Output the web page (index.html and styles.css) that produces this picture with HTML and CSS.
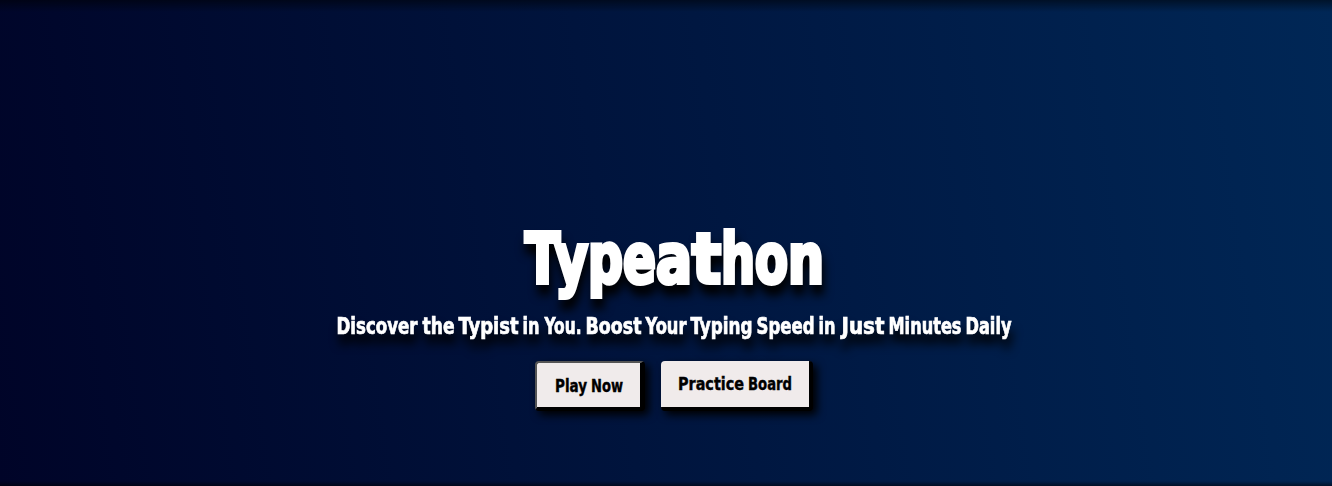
FILE: index.html
```
<!DOCTYPE html>
<html lang="en">
<head>
<meta charset="utf-8">
<title>Typeathon</title>
<link rel="stylesheet" href="styles.css">
</head>
<body>
<main class="hero">
  <h1 class="title">
    <svg class="lettering" width="310" height="84" viewBox="0 0 310 84">
      <text y="63"><tspan x="6" textLength="35" lengthAdjust="spacingAndGlyphs">T</tspan><tspan x="36" textLength="33" lengthAdjust="spacingAndGlyphs">y</tspan><tspan x="69" textLength="35" lengthAdjust="spacingAndGlyphs">p</tspan><tspan x="104" textLength="33" lengthAdjust="spacingAndGlyphs">e</tspan><tspan x="137" textLength="36" lengthAdjust="spacingAndGlyphs">a</tspan><tspan x="173" textLength="29" lengthAdjust="spacingAndGlyphs">t</tspan><tspan x="202" textLength="34" lengthAdjust="spacingAndGlyphs">h</tspan><tspan x="236" textLength="33" lengthAdjust="spacingAndGlyphs">o</tspan><tspan x="269" textLength="36" lengthAdjust="spacingAndGlyphs">n</tspan></text>
    </svg>
  </h1>
  <p class="tagline">
    <svg class="lettering" width="690" height="36" viewBox="0 0 690 36">
      <text y="24"><tspan x="7.5" textLength="81" lengthAdjust="spacingAndGlyphs">Discover</tspan> <tspan x="93.5" textLength="32" lengthAdjust="spacingAndGlyphs">the</tspan> <tspan x="129.5" textLength="60" lengthAdjust="spacingAndGlyphs">Typist</tspan> <tspan x="193.5" textLength="17" lengthAdjust="spacingAndGlyphs">in</tspan> <tspan x="215.5" textLength="37" lengthAdjust="spacingAndGlyphs">You.</tspan> <tspan x="256.5" textLength="56" lengthAdjust="spacingAndGlyphs">Boost</tspan> <tspan x="316.5" textLength="41" lengthAdjust="spacingAndGlyphs">Your</tspan> <tspan x="361.5" textLength="62" lengthAdjust="spacingAndGlyphs">Typing</tspan> <tspan x="427.5" textLength="58" lengthAdjust="spacingAndGlyphs">Speed</tspan> <tspan x="489.5" textLength="17" lengthAdjust="spacingAndGlyphs">in</tspan> <tspan x="512.5" textLength="43" lengthAdjust="spacingAndGlyphs">Just</tspan> <tspan x="559.5" textLength="73" lengthAdjust="spacingAndGlyphs">Minutes</tspan> <tspan x="636.5" textLength="46" lengthAdjust="spacingAndGlyphs">Daily</tspan></text>
    </svg>
  </p>
  <div class="actions">
    <button class="btn btn-play">
      <svg class="lettering" width="70" height="28" viewBox="0 0 70 28">
        <text y="20"><tspan x="1" textLength="32" lengthAdjust="spacingAndGlyphs">Play</tspan> <tspan x="37" textLength="32" lengthAdjust="spacingAndGlyphs">Now</tspan></text>
      </svg>
    </button>
    <button class="btn btn-practice">
      <svg class="lettering" width="116" height="28" viewBox="0 0 116 28">
        <text y="20"><tspan x="1" textLength="66" lengthAdjust="spacingAndGlyphs">Practice</tspan> <tspan x="71" textLength="44" lengthAdjust="spacingAndGlyphs">Board</tspan></text>
      </svg>
    </button>
  </div>
</main>
</body>
</html>
```
FILE: styles.css
```
* { box-sizing: border-box; }
body { margin: 0; background: #000428; }
.hero {
  height: 486px;
  overflow: hidden;
  padding: 220px 0 0 16px;
  display: flex;
  flex-direction: column;
  align-items: center;
  background:
    linear-gradient(to bottom, rgba(0, 0, 0, .5), transparent 12px),
    linear-gradient(to top, rgba(0, 0, 0, .5), transparent 5px),
    linear-gradient(82deg, #000428 0%, #002756 100%);
}
.lettering {
  display: block;
  overflow: visible;
  font-family: "DejaVu Sans Condensed", "DejaVu Sans", sans-serif;
  font-weight: 700;
}
.title { margin: 0; height: 90px; }
.title .lettering {
  font-size: 69px;
  fill: #fff;
  stroke: #fff;
  stroke-width: 4px;
  filter: drop-shadow(2px 10px 5px #000);
}
.tagline { margin: 0; height: 51px; }
.tagline .lettering {
  font-size: 23px;
  fill: #fff;
  stroke: #fff;
  stroke-width: .7px;
  filter: drop-shadow(2px 10px 5px #000);
}
.actions {
  display: flex;
  gap: 16px;
  width: 278px;
}
.btn {
  flex: none;
  display: flex;
  justify-content: center;
  height: 50px;
  margin: 0;
  padding: 9px 0 0;
  color: #000;
  background: #f0ebeb;
  border: 0 solid #000;
  border-width: 0 4px 4px 0;
  border-radius: 4px;
  box-shadow: 4px 4px 8px #000;
}
.btn .lettering {
  align-self: flex-start;
  font-size: 18px;
  stroke: #000;
  stroke-width: .4px;
}
.btn-play {
  width: 110px;
  border-color: #555 #000 #000 #555;
  border-width: 2px 5px 4px 2px;
}
.btn-practice { width: 152px; }
```
